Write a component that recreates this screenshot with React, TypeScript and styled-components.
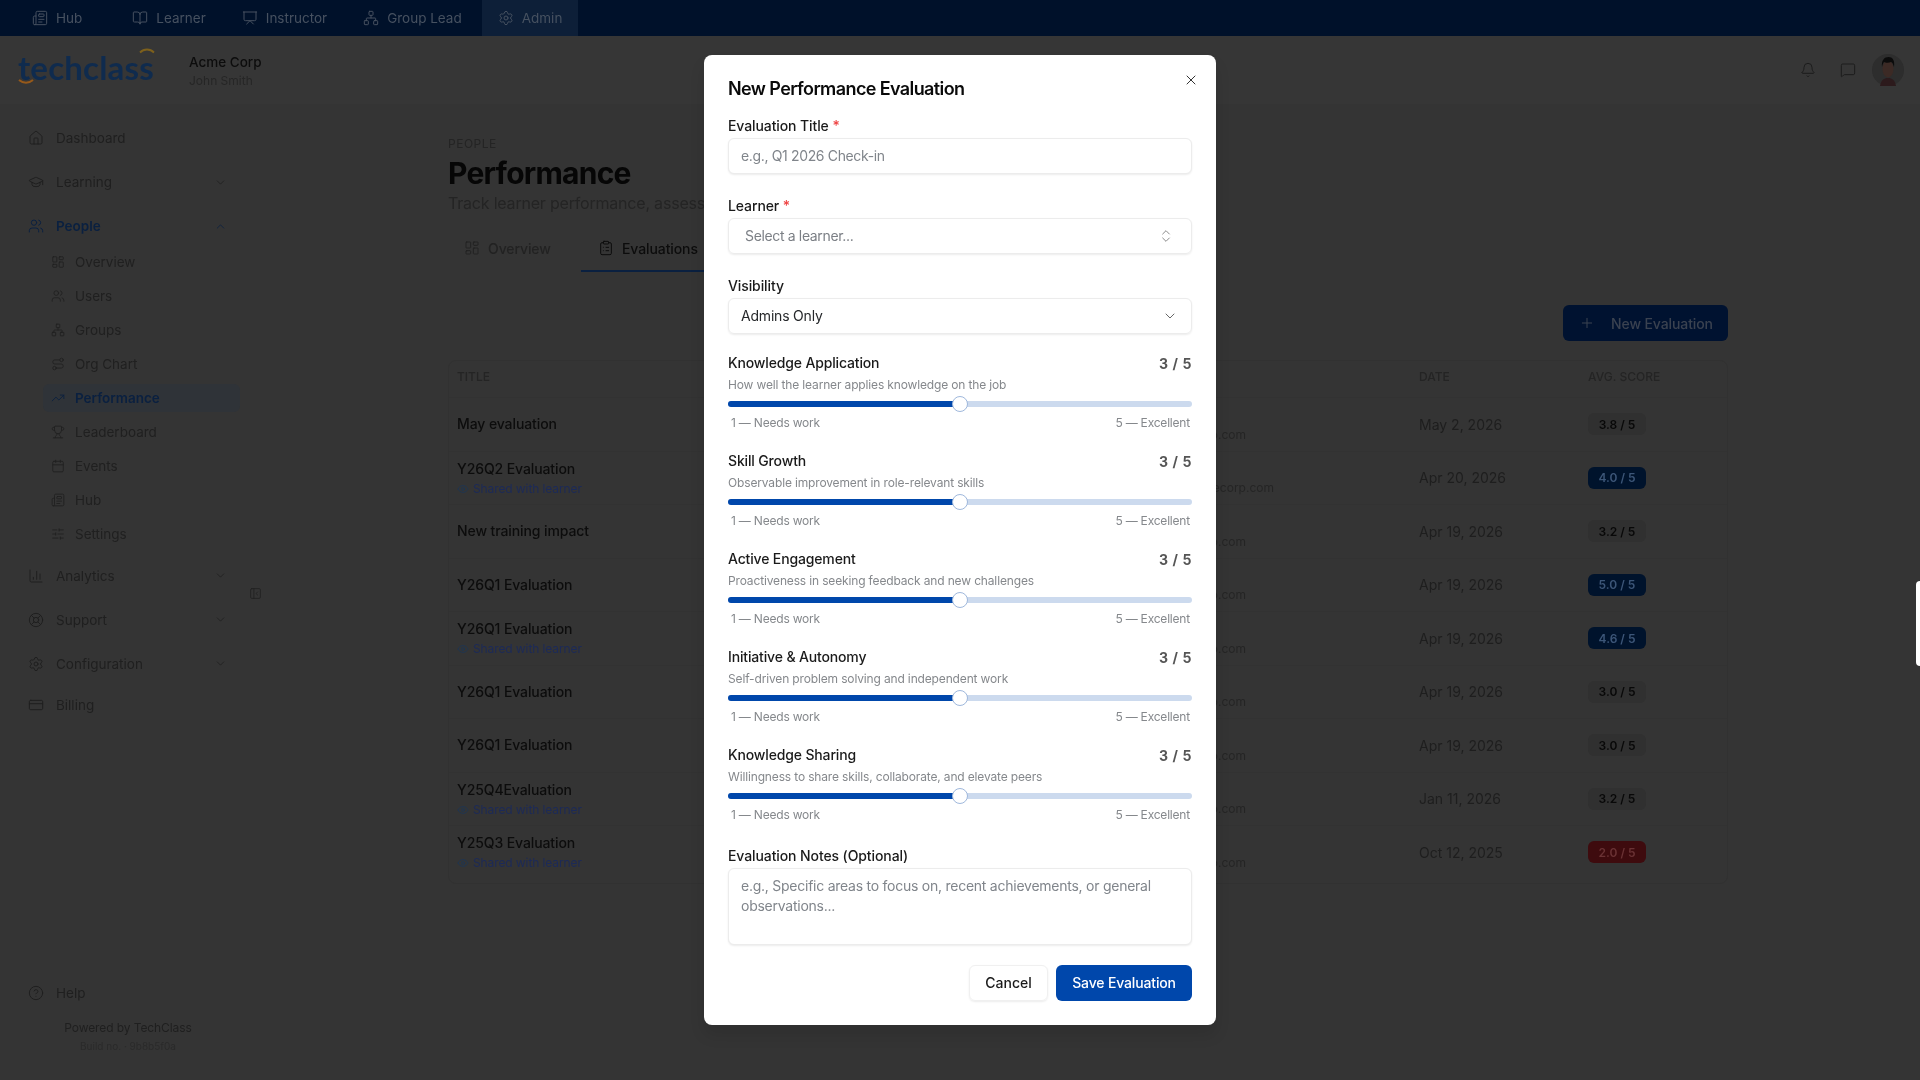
import styled, { createGlobalStyle } from "styled-components";
import {
  BarChart3,
  Bell,
  BookOpen,
  Calendar,
  ChevronDown,
  ChevronUp,
  ChevronsUpDown,
  CircleHelp,
  ClipboardList,
  CreditCard,
  Eye,
  GraduationCap,
  Home,
  LayoutDashboard,
  LifeBuoy,
  MessageSquare,
  Network,
  Newspaper,
  PanelLeftClose,
  Plus,
  Presentation,
  Route,
  Settings,
  SlidersHorizontal,
  TrendingUp,
  Trophy,
  Users,
  X,
} from "lucide-react";

const GlobalStyle = createGlobalStyle`
  html, body {
    margin: 0;
    height: 100%;
    overflow: hidden;
    background: #343434;
    font-family: "Inter", "Liberation Sans", sans-serif;
  }
  * {
    box-sizing: border-box;
  }
  svg {
    flex: none;
  }
`;

const topTabs = [
  { label: "Hub", Icon: Newspaper },
  { label: "Learner", Icon: BookOpen },
  { label: "Instructor", Icon: Presentation },
  { label: "Group Lead", Icon: Network },
  { label: "Admin", Icon: Settings },
];

const subNav = [
  { label: "Overview", Icon: LayoutDashboard },
  { label: "Users", Icon: Users },
  { label: "Groups", Icon: Network },
  { label: "Org Chart", Icon: Route },
  { label: "Performance", Icon: TrendingUp, active: true },
  { label: "Leaderboard", Icon: Trophy },
  { label: "Events", Icon: Calendar },
  { label: "Hub", Icon: Newspaper },
  { label: "Settings", Icon: SlidersHorizontal },
];

type Tone = "neutral" | "good" | "bad";

const rows: { title: string; shared?: boolean; date: string; score: string; tone: Tone; long?: boolean }[] = [
  { title: "May evaluation", date: "May 2, 2026", score: "3.8 / 5", tone: "neutral" },
  { title: "Y26Q2 Evaluation", shared: true, date: "Apr 20, 2026", score: "4.0 / 5", tone: "good", long: true },
  { title: "New training impact", date: "Apr 19, 2026", score: "3.2 / 5", tone: "neutral" },
  { title: "Y26Q1 Evaluation", date: "Apr 19, 2026", score: "5.0 / 5", tone: "good" },
  { title: "Y26Q1 Evaluation", shared: true, date: "Apr 19, 2026", score: "4.6 / 5", tone: "good" },
  { title: "Y26Q1 Evaluation", date: "Apr 19, 2026", score: "3.0 / 5", tone: "neutral" },
  { title: "Y26Q1 Evaluation", date: "Apr 19, 2026", score: "3.0 / 5", tone: "neutral" },
  { title: "Y25Q4Evaluation", shared: true, date: "Jan 11, 2026", score: "3.2 / 5", tone: "neutral" },
  { title: "Y25Q3 Evaluation", shared: true, date: "Oct 12, 2025", score: "2.0 / 5", tone: "bad" },
];

const criteria = [
  { name: "Knowledge Application", hint: "How well the learner applies knowledge on the job", value: 3 },
  { name: "Skill Growth", hint: "Observable improvement in role-relevant skills", value: 3 },
  { name: "Active Engagement", hint: "Proactiveness in seeking feedback and new challenges", value: 3 },
  { name: "Initiative & Autonomy", hint: "Self-driven problem solving and independent work", value: 3 },
  { name: "Knowledge Sharing", hint: "Willingness to share skills, collaborate, and elevate peers", value: 3 },
];

const Avatar = () => (
  <AvatarSvg viewBox="0 0 32 32">
    <circle cx="16" cy="16" r="16" fill="#2d2d2d" />
    <path d="M8 32c1-6 4-8 8-8s7 2 8 8z" fill="#2c1a1c" />
    <ellipse cx="16" cy="15" rx="5.500" ry="8.500" fill="#3c2a25" />
    <path d="M10 13c-.8-7 2.500-10 6.500-10s6.500 3 5.500 10c-1-3-1.500-4.500-3-5-2 1-5.500 1-7 0-1 1-1.500 3-2 5z" fill="#0b0b0b" />
  </AvatarSvg>
);

export default function App() {
  return (
    <>
      <GlobalStyle />
      <Page>
        <TopBar>
          {topTabs.map(({ label, Icon }) => (
            <TopTab key={label} $active={label === "Admin"} $wide={label === "Hub"}>
              <Icon size={16} strokeWidth={1.5} />
              {label}
            </TopTab>
          ))}
        </TopBar>
        <Header>
          <Logo>
            <LogoArc viewBox="0 0 16 6" $place="top">
              <path d="M1 4.500C5 .5 11 .5 15 4.500" fill="none" stroke="#7d601c" strokeWidth="1.800" />
            </LogoArc>
            techclass
            <LogoArc viewBox="0 0 16 5" $place="bottom">
              <path d="M1 1c4 3.500 10 3.500 14 0" fill="none" stroke="#96591a" strokeWidth="2" />
            </LogoArc>
          </Logo>
          <Org>
            <OrgName>Acme Corp</OrgName>
            <OrgUser>John Smith</OrgUser>
          </Org>
          <HeaderActions>
            <Bell size={16} strokeWidth={1.5} />
            <MessageSquare size={16} strokeWidth={1.5} />
            <Avatar />
          </HeaderActions>
        </Header>
        <Body>
          <Sidebar>
            <NavItem>
              <Home size={16} strokeWidth={1.5} />
              <NavLabel>Dashboard</NavLabel>
            </NavItem>
            <NavItem>
              <GraduationCap size={16} strokeWidth={1.5} />
              <NavLabel>Learning</NavLabel>
              <ChevronDown size={13} strokeWidth={1.5} />
            </NavItem>
            <NavItem $open>
              <Users size={16} strokeWidth={1.5} />
              <NavLabel>People</NavLabel>
              <ChevronUp size={13} strokeWidth={1.5} />
            </NavItem>
            <SubList>
              {subNav.map(({ label, Icon, active }) => (
                <SubItem key={label} $active={active}>
                  <Icon size={14} strokeWidth={1.5} />
                  {label}
                </SubItem>
              ))}
            </SubList>
            <NavItem>
              <BarChart3 size={16} strokeWidth={1.5} />
              <NavLabel>Analytics</NavLabel>
              <ChevronDown size={13} strokeWidth={1.5} />
            </NavItem>
            <NavItem>
              <LifeBuoy size={16} strokeWidth={1.5} />
              <NavLabel>Support</NavLabel>
              <ChevronDown size={13} strokeWidth={1.5} />
            </NavItem>
            <NavItem>
              <Settings size={16} strokeWidth={1.5} />
              <NavLabel>Configuration</NavLabel>
              <ChevronDown size={13} strokeWidth={1.5} />
            </NavItem>
            <BillingItem>
              <CreditCard size={16} strokeWidth={1.5} />
              <NavLabel>Billing</NavLabel>
            </BillingItem>
            <CollapseToggle>
              <PanelLeftClose size={13} strokeWidth={1.5} />
            </CollapseToggle>
            <SidebarFoot>
              <NavItem>
                <CircleHelp size={16} strokeWidth={1.5} />
                <NavLabel>Help</NavLabel>
              </NavItem>
              <Powered>Powered by TechClass</Powered>
              <BuildInfo>Build no. · 9b8b5f0a</BuildInfo>
            </SidebarFoot>
          </Sidebar>
          <Main>
            <Eyebrow>People</Eyebrow>
            <PageTitle>Performance</PageTitle>
            <PageSub>Track learner performance, assessments, and evaluations</PageSub>
            <Tabs>
              <Tab>
                <LayoutDashboard size={16} strokeWidth={1.5} />
                Overview
              </Tab>
              <Tab $active>
                <ClipboardList size={16} strokeWidth={1.5} />
                Evaluations
              </Tab>
            </Tabs>
            <Actions>
              <NewButton>
                <Plus size={16} strokeWidth={1.5} />
                New Evaluation
              </NewButton>
            </Actions>
            <Table>
              <HeadRow>
                <span>Title</span>
                <HeadSpacer />
                <span>Date</span>
                <span>Avg. Score</span>
              </HeadRow>
              {rows.map((row, i) => (
                <Row key={i}>
                  <TitleCell $shared={row.shared}>
                    <RowTitle>{row.title}</RowTitle>
                    {row.shared && (
                      <Shared>
                        <Eye size={12} strokeWidth={1.5} />
                        Shared with learner
                      </Shared>
                    )}
                  </TitleCell>
                  <Learner $long={row.long}>
                    <LearnerMail>john.smith@acmecorp.com</LearnerMail>
                  </Learner>
                  <RowDate>{row.date}</RowDate>
                  <Score $tone={row.tone}>{row.score}</Score>
                </Row>
              ))}
            </Table>
          </Main>
        </Body>
      </Page>
      <EdgeTab />
      <ModalLayer>
        <Modal>
          <CloseButton>
            <X size={16} strokeWidth={1.5} />
          </CloseButton>
          <ModalTitle>New Performance Evaluation</ModalTitle>
          <Field $mt={17}>
            <Label>
              Evaluation Title <Req>*</Req>
            </Label>
            <TextInput placeholder="e.g., Q1 2026 Check-in" />
          </Field>
          <Field $mt={22}>
            <Label>
              Learner <Req>*</Req>
            </Label>
            <SelectBox $inset={17}>
              <Placeholder>Select a learner...</Placeholder>
              <ChevronsUpDown size={16} strokeWidth={1.5} />
            </SelectBox>
          </Field>
          <Field $mt={22}>
            <Label>Visibility</Label>
            <SelectBox $inset={13}>
              <SelectValue>Admins Only</SelectValue>
              <VisibilityChevron>
                <ChevronDown size={16} strokeWidth={1.5} />
              </VisibilityChevron>
            </SelectBox>
          </Field>
          <Criteria>
            {criteria.map((c) => (
              <Criterion key={c.name}>
                <CriterionHead>
                  <CriterionName>{c.name}</CriterionName>
                  <CriterionValue>{c.value} / 5</CriterionValue>
                </CriterionHead>
                <CriterionHint>{c.hint}</CriterionHint>
                <Slider>
                  <SliderTrack>
                    <SliderFill style={{ width: `${((c.value - 1) / 4) * 100}%` }} />
                  </SliderTrack>
                  <SliderThumb style={{ left: `${((c.value - 1) / 4) * 100}%` }} />
                </Slider>
                <SliderEnds>
                  <span>1 — Needs work</span>
                  <span>5 — Excellent</span>
                </SliderEnds>
              </Criterion>
            ))}
          </Criteria>
          <Field $mt={23}>
            <Label>Evaluation Notes (Optional)</Label>
            <Notes placeholder="e.g., Specific areas to focus on, recent achievements, or general observations..." />
          </Field>
          <Footer>
            <CancelButton>Cancel</CancelButton>
            <SaveButton>Save Evaluation</SaveButton>
          </Footer>
        </Modal>
      </ModalLayer>
    </>
  );
}

const Page = styled.div`
  width: 1920px;
  height: 1080px;
  display: flex;
  flex-direction: column;
  background: #343434;
  color: #202020;
  filter: blur(0.35px);
`;

const TopBar = styled.div`
  height: 36px;
  flex: none;
  display: flex;
  gap: 4px;
  padding-left: 16px;
  background: #00112a;
`;

const TopTab = styled.div<{ $active?: boolean; $wide?: boolean }>`
  display: flex;
  align-items: center;
  gap: 8px;
  padding: 0 16px;
  margin-right: ${(p) => (p.$wide ? "14px" : "0")};
  font-size: 13.500px;
  color: #465160;
  background: ${(p) => (p.$active ? "#0d1f38" : "transparent")};
`;

const Header = styled.div`
  height: 68px;
  flex: none;
  display: flex;
  align-items: flex-start;
  background: #363636;
`;

const Logo = styled.div`
  position: relative;
  margin: 13px 0 0 18px;
  width: 171px;
  font-family: "Lato", sans-serif;
  font-size: 33px;
  line-height: 36px;
  font-weight: 700;
  letter-spacing: 0.2px;
  color: #0f2b4e;
`;

const LogoArc = styled.svg<{ $place: "top" | "bottom" }>`
  position: absolute;
  width: 16px;
  left: ${(p) => (p.$place === "top" ? "121px" : "0")};
  top: ${(p) => (p.$place === "top" ? "-1px" : "30px")};
`;

const Org = styled.div`
  margin-top: 15px;
`;

const OrgName = styled.div`
  font-size: 13.500px;
  line-height: 22px;
  font-weight: 500;
  color: #0c0c0c;
`;

const OrgUser = styled.div`
  font-size: 12px;
  line-height: 16px;
  color: #262626;
`;

const HeaderActions = styled.div`
  margin: 18px 16px 0 auto;
  display: flex;
  align-items: center;
  gap: 24px;
  color: #1c1c1c;
`;

const AvatarSvg = styled.svg`
  width: 32px;
  height: 32px;
  margin-left: -8px;
`;

const Body = styled.div`
  flex: 1;
  display: flex;
  min-height: 0;
`;

const Sidebar = styled.aside`
  position: relative;
  width: 256px;
  flex: none;
  display: flex;
  flex-direction: column;
  gap: 8px;
  padding: 16px 16px 0 28px;
`;

const NavItem = styled.div<{ $open?: boolean }>`
  height: 36px;
  flex: none;
  display: flex;
  align-items: center;
  gap: 12px;
  padding-right: 13px;
  font-size: 13.500px;
  font-weight: ${(p) => (p.$open ? 600 : 400)};
  color: ${(p) => (p.$open ? "#0a2040" : "#1f1f1f")};
`;

const NavLabel = styled.span`
  flex: 1;
`;

const BillingItem = styled(NavItem)`
  margin-top: -3px;
`;

const SubList = styled.div`
  margin: -4px 0 1.500px 15px;
  display: flex;
  flex-direction: column;
  gap: 6px;
`;

const SubItem = styled.div<{ $active?: boolean }>`
  height: 28px;
  display: flex;
  align-items: center;
  gap: 10px;
  padding-left: 8px;
  border-radius: 6px;
  font-size: 13.500px;
  font-weight: ${(p) => (p.$active ? 600 : 400)};
  color: ${(p) => (p.$active ? "#0a2040" : "#202020")};
  background: ${(p) => (p.$active ? "#2f3338" : "transparent")};
`;

const CollapseToggle = styled.div`
  position: absolute;
  right: -6px;
  top: 480px;
  color: #202020;
`;

const SidebarFoot = styled.div`
  position: absolute;
  left: 28px;
  right: 16px;
  top: 871px;
`;

const Powered = styled.div`
  margin: 8px 0 0 -28px;
  width: 256px;
  text-align: center;
  font-size: 12px;
  line-height: 18px;
  letter-spacing: -0.1px;
  color: #1f1f1f;
`;

const BuildInfo = styled.div`
  margin: 2px 0 0 -28px;
  width: 256px;
  text-align: center;
  font-size: 10px;
  line-height: 14px;
  color: #2a2a2a;
`;

const Main = styled.main`
  width: 1280px;
  margin-left: 192px;
  padding-top: 32px;
`;

const Eyebrow = styled.div`
  width: fit-content;
  font-size: 12px;
  line-height: 16px;
  letter-spacing: 0.5px;
  text-transform: uppercase;
  color: #242424;
`;

const PageTitle = styled.h1`
  width: fit-content;
  margin: 3px 0 0;
  font-size: 30px;
  line-height: 36px;
  font-weight: 700;
  letter-spacing: -0.750px;
  color: #060606;
`;

const PageSub = styled.div`
  width: 256px;
  overflow: hidden;
  white-space: nowrap;
  font-size: 16px;
  line-height: 24px;
  letter-spacing: -0.2px;
  color: #242424;
`;

const Tabs = styled.div`
  margin-top: 11px;
  display: flex;
  gap: 16px;
  height: 46px;
`;

const Tab = styled.div<{ $active?: boolean }>`
  display: flex;
  align-items: center;
  gap: 8px;
  padding: 0 ${(p) => (p.$active ? "17px" : "0")} 0 ${(p) => (p.$active ? "17px" : "16px")};
  width: ${(p) => (p.$active ? "auto" : "117px")};
  font-size: 14px;
  font-weight: 500;
  letter-spacing: -0.1px;
  color: ${(p) => (p.$active ? "#0c0c0c" : "#222")};
  border-bottom: 2px solid ${(p) => (p.$active ? "#0a2040" : "transparent")};
`;

const Actions = styled.div`
  margin-top: 33px;
  display: flex;
  justify-content: flex-end;
`;

const NewButton = styled.div`
  width: 165px;
  height: 36px;
  display: flex;
  align-items: center;
  gap: 16px;
  padding-left: 16px;
  border-radius: 6px;
  background: #001230;
  color: #3a4250;
  font-size: 14px;
  font-weight: 500;
  letter-spacing: -0.1px;
`;

const Table = styled.div`
  margin-top: 19px;
  padding-bottom: 4px;
  border-radius: 8px;
  border: 1px solid #313131;
`;

const columns = "543px 274px 145px 169px 1fr";

const HeadRow = styled.div`
  height: 36px;
  padding: 0 0 5px 8px;
  display: grid;
  grid-template-columns: ${columns};
  align-items: center;
  font-size: 12px;
  font-weight: 500;
  text-transform: uppercase;
  color: #242424;
`;

const HeadSpacer = styled.span`
  grid-column: 2 / span 2;
`;

const Row = styled.div`
  height: 53.500px;
  display: grid;
  grid-template-columns: ${columns};
  align-items: center;
  padding-left: 8px;
  border-top: 1px solid #323232;
`;

const TitleCell = styled.div<{ $shared?: boolean }>`
  width: fit-content;
  padding-top: ${(p) => (p.$shared ? "2px" : "0")};
`;

const RowTitle = styled.div`
  font-size: 14px;
  line-height: 20px;
  font-weight: 500;
  letter-spacing: -0.1px;
  color: #0c0c0c;
`;

const Shared = styled.div`
  display: flex;
  align-items: center;
  gap: 4px;
  font-size: 12px;
  line-height: 20px;
  letter-spacing: -0.1px;
  color: #1c2a58;
  svg {
    color: #1a3558;
  }
`;

const Learner = styled.div<{ $long?: boolean }>`
  grid-column: 2;
  margin-left: 216px;
  padding: 21px ${(p) => (p.$long ? "0" : "28px")} 0 0;
  display: flex;
  justify-content: flex-end;
  overflow: hidden;
  white-space: nowrap;
`;

const LearnerMail = styled.div`
  flex: none;
  font-size: 12px;
  line-height: 16px;
  color: #252525;
`;

const RowDate = styled.div`
  grid-column: 4;
  font-size: 14px;
  color: #1e1e1e;
`;

const toneStyles: Record<Tone, string> = {
  neutral: "background: #303030; color: #080808;",
  good: "background: #00132c; color: #3c5678;",
  bad: "background: #3e0b0e; color: #6a3234;",
};

const Score = styled.div<{ $tone: Tone }>`
  grid-column: 5;
  width: 58px;
  height: 22px;
  display: flex;
  align-items: center;
  justify-content: center;
  border-radius: 6px;
  font-size: 12px;
  font-weight: 600;
  ${(p) => toneStyles[p.$tone]}
`;

const EdgeTab = styled.div`
  position: fixed;
  right: 0;
  top: 581px;
  width: 4px;
  height: 85px;
  background: #fff;
  border-radius: 6px 0 0 6px;
`;

const ModalLayer = styled.div`
  position: fixed;
  inset: 0;
  display: flex;
  align-items: center;
  justify-content: center;
`;

const Modal = styled.div`
  position: relative;
  width: 512px;
  padding: 24px;
  display: flex;
  flex-direction: column;
  background: #fff;
  border-radius: 8px;
  box-shadow: 0 10px 15px rgba(0, 0, 0, 0.1);
  color: #1a1a1a;
`;

const CloseButton = styled.div`
  position: absolute;
  top: 17px;
  right: 17px;
  display: flex;
  color: #333;
`;

const ModalTitle = styled.h2`
  margin: 0;
  font-size: 18px;
  line-height: 20px;
  font-weight: 600;
  letter-spacing: -0.6px;
  color: #0a0a0a;
`;

const Field = styled.div<{ $mt: number }>`
  margin-top: ${(p) => p.$mt}px;
  display: flex;
  flex-direction: column;
  gap: 2px;
`;

const Label = styled.label`
  font-size: 14px;
  line-height: 20px;
  font-weight: 500;
  letter-spacing: -0.1px;
  color: #1a1a1a;
`;

const Req = styled.span`
  color: #ef4444;
`;

const TextInput = styled.input`
  height: 36px;
  width: 100%;
  padding: 0 12px 2px;
  border: 1px solid #ececec;
  border-radius: 6px;
  box-shadow: 0 1px 2px rgba(0, 0, 0, 0.08);
  font: inherit;
  font-size: 14px;
  letter-spacing: -0.35px;
  color: #1a1a1a;
  outline: none;
  &::placeholder {
    color: #80858b;
  }
`;

const SelectBox = styled.div<{ $inset: number }>`
  height: 36px;
  display: flex;
  align-items: center;
  justify-content: space-between;
  padding: 0 17px 0 ${(p) => p.$inset - 1}px;
  border: 1px solid #ececec;
  border-radius: 6px;
  box-shadow: 0 1px 2px rgba(0, 0, 0, 0.08);
  font-size: 14px;
  color: #26282b;
  svg {
    color: #8a8a8a;
  }
`;

const VisibilityChevron = styled.span`
  display: flex;
  margin-right: -4px;
  svg {
    color: #666;
  }
`;

const SelectValue = styled.span`
  margin-top: -2px;
  letter-spacing: -0.2px;
`;

const Placeholder = styled.span`
  margin-top: -2px;
  letter-spacing: -0.35px;
  color: #7b7f85;
`;

const Criteria = styled.div`
  margin-top: 19px;
  display: flex;
  flex-direction: column;
  gap: 20px;
`;

const Criterion = styled.div`
  display: flex;
  flex-direction: column;
`;

const CriterionHead = styled.div`
  display: flex;
  justify-content: space-between;
  align-items: center;
`;

const CriterionName = styled.div`
  font-size: 14px;
  line-height: 20px;
  font-weight: 500;
  letter-spacing: -0.15px;
  color: #1a1a1a;
`;

const CriterionValue = styled.div`
  font-size: 14px;
  font-weight: 700;
  letter-spacing: 0.6px;
  color: #555;
`;

const CriterionHint = styled.div`
  margin-top: 4px;
  font-size: 12px;
  line-height: 16px;
  letter-spacing: -0.15px;
  color: #85888c;
`;

const Slider = styled.div`
  position: relative;
  height: 16px;
  margin-top: 3px;
  display: flex;
  align-items: center;
`;

const SliderTrack = styled.div`
  width: 100%;
  height: 6px;
  border-radius: 3px;
  overflow: hidden;
  background: #ccdaee;
`;

const SliderFill = styled.div`
  height: 100%;
  background: #0047ab;
`;

const SliderThumb = styled.div`
  position: absolute;
  top: 0;
  width: 16px;
  height: 16px;
  margin-left: -8px;
  border-radius: 50%;
  background: #fff;
  border: 1px solid #9fb8dc;
`;

const SliderEnds = styled.div`
  margin-top: 3px;
  padding: 0 2px 0 3px;
  display: flex;
  justify-content: space-between;
  font-size: 12px;
  line-height: 16px;
  letter-spacing: -0.2px;
  color: #85888c;
`;

const Notes = styled.textarea`
  height: 77px;
  padding: 7px 12px;
  border: 1px solid #ececec;
  border-radius: 6px;
  box-shadow: 0 1px 2px rgba(0, 0, 0, 0.08);
  font: inherit;
  font-size: 14px;
  line-height: 20px;
  letter-spacing: -0.25px;
  resize: none;
  outline: none;
  &::placeholder {
    color: #80858b;
  }
`;

const Footer = styled.div`
  margin-top: 20px;
  display: flex;
  justify-content: flex-end;
  gap: 8px;
`;

const CancelButton = styled.div`
  width: 79px;
  height: 36px;
  padding-bottom: 1px;
  display: flex;
  align-items: center;
  justify-content: center;
  border: 1px solid #f0f0f0;
  border-radius: 6px;
  box-shadow: 0 1px 2px rgba(0, 0, 0, 0.08);
  font-size: 14px;
  font-weight: 500;
  color: #1a1a1a;
`;

const SaveButton = styled.div`
  width: 136px;
  height: 36px;
  padding-bottom: 1px;
  display: flex;
  align-items: center;
  justify-content: center;
  border-radius: 6px;
  background: #0047ab;
  font-size: 14px;
  font-weight: 500;
  letter-spacing: -0.15px;
  color: #fff;
`;
